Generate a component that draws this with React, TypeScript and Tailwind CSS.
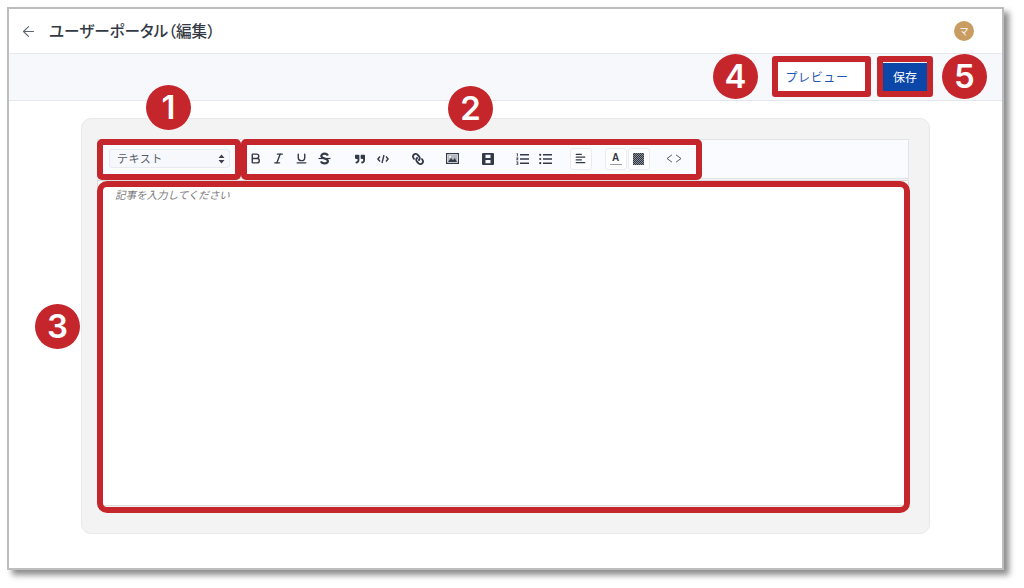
import type { ReactNode } from "react";
import { ArrowLeft, Bold, Italic, Underline } from "lucide-react";
import { FaAlignLeft, FaLink, FaQuoteRight } from "react-icons/fa";

const jp = "font-['Noto_Sans_CJK_JP','Noto_Sans',sans-serif]";

function Tool({ children, boxed }: { children: ReactNode; boxed?: boolean }) {
  return (
    <div className="flex h-[23px] w-[23px] items-center justify-center rounded-[3px] text-[#333a48]">
      {boxed ? (
        <div className="flex h-[22px] w-[22px] items-center justify-center rounded-[3px] border border-[#e9ebf0] bg-white">
          {children}
        </div>
      ) : (
        children
      )}
    </div>
  );
}

function ListLines({ children }: { children: ReactNode }) {
  return (
    <svg width="13" height="12" viewBox="0 0 13 12" fill="currentColor">
      <path d="M4 1h9v1.5H4zM4 5.2h9v1.5H4zM4 9.5h9V11H4z" />
      {children}
    </svg>
  );
}

function Toolbar() {
  return (
    <div className="flex h-10 items-center border border-[#e3e4e8] bg-[#fafbfe] pb-[1px]">
      <div className="ml-[11px] flex h-[19px] w-[121px] items-center justify-between rounded-[3px] border border-[#e8eaf1] bg-[#f7f8fc] pl-[7px] pr-[4px]">
        <span className="text-[11px] leading-none tracking-[0.5px] text-[#555b66]">テキスト</span>
        <svg width="7" height="10" viewBox="0 0 7 10" className="text-[#3a4150]">
          <path d="M3.5 0.5 6.5 4H0.5ZM3.5 9.5 0.5 6H6.5Z" fill="currentColor" />
        </svg>
      </div>
      <div className="ml-[14px] flex items-center gap-3">
        <div className="flex">
          <Tool><Bold size={13} strokeWidth={2.6} /></Tool>
          <Tool><Italic size={13} strokeWidth={2.6} /></Tool>
          <Tool><Underline size={13} strokeWidth={2.6} /></Tool>
          <Tool>
            <svg width="13" height="13" viewBox="0 0 13 13" fill="none" stroke="currentColor">
              <path d="M9.8 3.6C9.3 2.3 8 1.7 6.5 1.7c-1.8 0-3.2.9-3.2 2.3 0 3 6.6 2 6.6 5 0 1.4-1.5 2.3-3.4 2.3-1.6 0-3-.7-3.5-2" strokeWidth="2.2" />
              <path d="M0.5 6.5h12" strokeWidth="1.2" />
            </svg>
          </Tool>
        </div>
        <div className="flex">
          <Tool><FaQuoteRight size={10} /></Tool>
          <Tool>
            <svg width="12" height="10" viewBox="0 0 12 10" fill="none" stroke="currentColor" strokeWidth="1.4">
              <path d="M3 2.5 0.9 5 3 7.5M9 2.5 11.1 5 9 7.5M7 1 5 9" />
            </svg>
          </Tool>
        </div>
        <Tool><FaLink size={12} className="-scale-x-100" /></Tool>
        <Tool>
          <svg width="13" height="11" viewBox="0 0 13 11">
            <path fill="currentColor" fillRule="evenodd" d="M0 0h13v11H0zM1.2 1.2v8.6h10.6V1.2z" />
            <path fill="currentColor" d="M2 2h9v7H2z" opacity=".35" />
            <path fill="currentColor" d="M2 9 5 5l2 2.2L8.8 5 11 9z" />
            <circle cx="4" cy="3.8" r="1" fill="#fafbfe" />
          </svg>
        </Tool>
        <Tool>
          <svg width="12" height="12" viewBox="0 0 12 12">
            <path fill="currentColor" fillRule="evenodd" d="M1 0h10a1 1 0 0 1 1 1v10a1 1 0 0 1-1 1H1a1 1 0 0 1-1-1V1a1 1 0 0 1 1-1zM3.5 1.8v3.2h5V1.8zM3.5 7v3.2h5V7z" />
          </svg>
        </Tool>
        <div className="flex">
          <Tool>
            <ListLines>
              <path d="M.6.3h1.2v3.2H.9V1.1H.6zM.3 4.6h2v.8l-1.1 1h1.1v.8h-2v-.8l1.1-1H.3zM.3 8.5h2v3.2h-2v-.7h1.2v-.6H.7v-.6h.8v-.6H.3z" />
            </ListLines>
          </Tool>
          <Tool>
            <ListLines>
              <circle cx="1.2" cy="1.8" r="1.1" />
              <circle cx="1.2" cy="6" r="1.1" />
              <circle cx="1.2" cy="10.2" r="1.1" />
            </ListLines>
          </Tool>
        </div>
        <Tool boxed><FaAlignLeft size={11} /></Tool>
        <div className="flex">
          <Tool boxed>
            <div className="flex flex-col items-center">
              <span className="font-['Liberation_Sans',sans-serif] text-[10px] font-bold leading-[10px]">A</span>
              <div className="mt-[1px] h-[1px] w-[12px] bg-[#9a9ea8]" />
            </div>
          </Tool>
          <Tool boxed>
            <div className="h-[12px] w-[11px] bg-[repeating-conic-gradient(#2f3542_0_25%,#8b8f98_0_50%)] bg-[length:2px_2px]" />
          </Tool>
        </div>
        <Tool>
          <svg width="16" height="9" viewBox="0 0 16 9" fill="none" stroke="#555b66" strokeWidth="1">
            <path d="M6 .8 1 4.5 6 8.2M10 .8l5 3.7-5 3.7" />
          </svg>
        </Tool>
      </div>
    </div>
  );
}

// red annotation frame drawn over the screenshot
function Frame({ className }: { className: string }) {
  return <div className={`absolute border-[6px] border-[#c5262c] ${className}`} />;
}

function Badge({ n, className }: { n: number; className: string }) {
  return (
    <div
      className={`absolute flex h-[45px] w-[45px] items-center justify-center rounded-full bg-[#c5262c] font-['Inter',sans-serif] text-[33px] font-semibold leading-none text-white ${className}`}
    >
      {n}
    </div>
  );
}

export default function App() {
  return (
    <div className={`relative h-[588px] w-[1024px] overflow-hidden bg-white pl-[7px] pt-[7px] ${jp}`}>
      <div className="flex h-[563px] w-[997px] flex-col border-2 border-[#bdbdbd] bg-white shadow-[5px_5px_6px_rgba(0,0,0,0.45)]">
        <header className="flex h-[45px] items-center justify-between border-b border-[#e7e8ec] pl-[11px] pr-[28px]">
          <div className="flex items-center gap-[12px]">
            <ArrowLeft size={17} strokeWidth={1.5} className="text-[#5f6672]" />
            <h1 className="text-[15.6px] font-medium leading-none text-[#333a45] [font-feature-settings:'palt']">ユーザーポータル（編集）</h1>
          </div>
          <div className="flex h-5 w-5 items-center justify-center rounded-full bg-[#c99c62] text-[9px] leading-none text-white">
            マ
          </div>
        </header>
        <div className="flex h-[47px] items-center justify-end gap-[17px] border-b border-[#e4e6ee] bg-[#f7f8fc] pr-[75px]">
          <button className="h-[29px] w-[89px] rounded-[2px] bg-white pr-[9px] text-[12px] tracking-[0.6px] text-[#1f55b5]">プレビュー</button>
          <button className="h-[29px] w-[44px] bg-[#0a47a9] text-[12px] text-white">保存</button>
        </div>
        <main className="flex-1 pt-[17px]">
          <div className="ml-[72px] h-[416px] w-[849px] rounded-[10px] border border-[#e8e8e8] bg-[#f3f3f3] pb-[27px] pl-[15px] pr-[20px] pt-[20px]">
            <div className="flex h-full flex-col">
              <Toolbar />
              <div className="mt-[1px] flex-1 border border-[#dcdcdc] bg-white px-[17px] py-[6px]">
                <p className="text-[10.5px] italic leading-[15px] text-[#7b7b7b]">記事を入力してください</p>
              </div>
            </div>
          </div>
        </main>
      </div>

      <Frame className="left-[97px] top-[139px] h-[41px] w-[144px] rounded-[5px]" />
      <Frame className="left-[241px] top-[139px] h-[41px] w-[461px] rounded-[5px]" />
      <Frame className="left-[97px] top-[181px] h-[332px] w-[813px] rounded-[10px]" />
      <Frame className="left-[772px] top-[56px] h-[41px] w-[99px] rounded-[3px]" />
      <Frame className="left-[877px] top-[56px] h-[41px] w-[56px] rounded-[3px]" />

      <Badge n={1} className="left-[146px] top-[85px]" />
      <Badge n={2} className="left-[448px] top-[86px]" />
      <Badge n={3} className="left-[35px] top-[304px]" />
      <Badge n={4} className="left-[713px] top-[54px]" />
      <Badge n={5} className="left-[942px] top-[54px]" />
    </div>
  );
}
